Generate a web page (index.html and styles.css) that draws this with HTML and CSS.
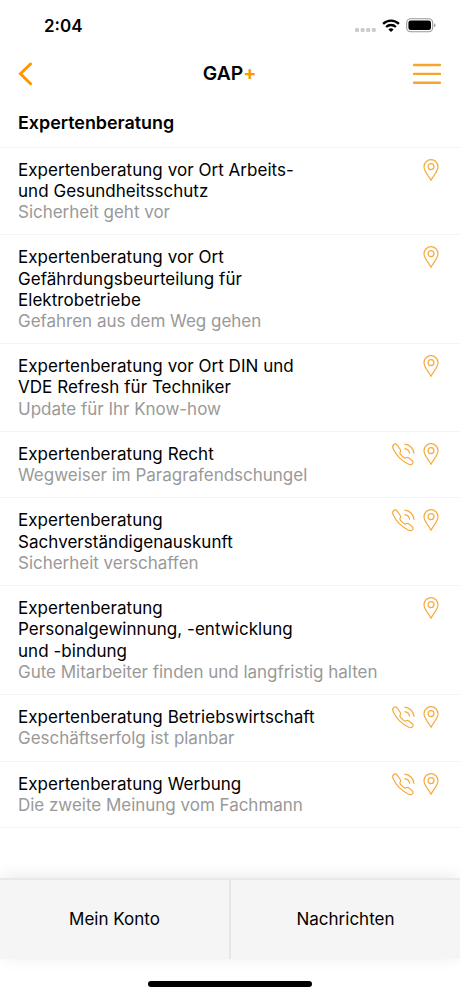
FILE: index.html
```html
<!DOCTYPE html>
<html lang="de">
<head>
  <meta charset="UTF-8" />
  <meta name="viewport" content="width=device-width, initial-scale=1.0"/>
  <title>GAP+ Expertenberatung</title>
  <link rel="stylesheet" href="styles.css">
</head>
<body>
  <!-- Icons -->
  <svg class="sprite" aria-hidden="true">
    <symbol id="pin" viewBox="0 0 16 22">
      <path d="M8 21.2C6.2 17.3 1 12.4 1 7.7a7 7 0 0 1 14 0c0 4.7-5.2 9.6-7 13.5z"/>
      <circle cx="8" cy="7.6" r="3"/>
    </symbol>
    <symbol id="telefon" viewBox="0 0 24 24">
      <path d="M2.700 1.500C1.400 2.500 1.400 4.200 2.400 6.200c1.400 2.900 3.200 5.700 5.900 8.400 2.800 2.800 6 5.100 9.400 6.700 1.500.7 2.900.5 3.900-.7.8-1 .7-2-.3-2.900l-3.800-3c-.9-.7-1.700-.5-2.500.1-.6.500-1.200.5-1.900 0-1.500-1.100-2.900-2.500-3.900-3.900-.5-.7-.4-1.300.1-1.900.6-.8.600-1.400.1-2.300L6.300 2.200C5.400.7 4 .5 2.700 1.500z"/>
      <path d="M13.400 1.200c5.100.2 9.200 4.100 9.600 9.400M13.400 5.600c2.800.2 4.900 2.200 5.200 5"/>
    </symbol>
  </svg>

  <div class="status">
    <span class="uhrzeit">2:04</span>
    <div class="status-icons">
      <svg class="signal" width="21" height="4" viewBox="0 0 21 4">
        <rect x="0" y="0" width="4" height="4" rx="1.300"/>
        <rect x="5.600" y="0" width="4" height="4" rx="1.300"/>
        <rect x="11.200" y="0" width="4" height="4" rx="1.300"/>
        <rect x="16.800" y="0" width="4" height="4" rx="1.300"/>
      </svg>
      <svg class="wlan" width="18" height="13" viewBox="0 0 18 13">
        <path d="M1.100 4.900a11.300 11.300 0 0 1 15.800 0M4.100 8a7 7 0 0 1 9.800 0" fill="none" stroke="#000" stroke-width="2.300"/>
        <path d="M9 13L6.400 10.400a3.900 3.900 0 0 1 5.200 0z"/>
      </svg>
      <svg class="akku" width="30" height="15" viewBox="0 0 30 15">
        <rect x=".7" y=".7" width="26" height="13" rx="4" fill="none" stroke="#999" stroke-width="1.100"/>
        <rect x="2.400" y="2.400" width="22.600" height="9.600" rx="2.300"/>
        <path d="M28.200 5.300q1.200.5 1.200 2t-1.200 2z" fill="#888"/>
      </svg>
    </div>
  </div>

  <header class="kopf">
    <svg class="zurueck" width="16" height="24" viewBox="0 0 16 24">
      <path d="M13.500 2L3.500 11.800 13.500 21.700"/>
    </svg>
    <h1 class="logo">GAP<span>+</span></h1>
    <svg class="menue" width="28" height="22" viewBox="0 0 28 22">
      <path d="M1 2h26M1 10.900h26M1 19.800h26"/>
    </svg>
  </header>

  <h2 class="titel">Expertenberatung</h2>

  <ul class="liste">
    <li class="eintrag">
      <div class="text">
        <p class="name">Expertenberatung vor Ort Arbeits-<br>und Gesundheitsschutz</p>
        <p class="info">Sicherheit geht vor</p>
      </div>
      <div class="icons"><svg class="pin"><use href="#pin"/></svg></div>
    </li>
    <li class="eintrag">
      <div class="text">
        <p class="name">Expertenberatung vor Ort<br>Gefährdungsbeurteilung für<br>Elektrobetriebe</p>
        <p class="info">Gefahren aus dem Weg gehen</p>
      </div>
      <div class="icons"><svg class="pin"><use href="#pin"/></svg></div>
    </li>
    <li class="eintrag">
      <div class="text">
        <p class="name">Expertenberatung vor Ort DIN und<br>VDE Refresh für Techniker</p>
        <p class="info">Update für Ihr Know-how</p>
      </div>
      <div class="icons"><svg class="pin"><use href="#pin"/></svg></div>
    </li>
    <li class="eintrag">
      <div class="text">
        <p class="name">Expertenberatung Recht</p>
        <p class="info">Wegweiser im Paragrafendschungel</p>
      </div>
      <div class="icons"><svg class="telefon"><use href="#telefon"/></svg><svg class="pin"><use href="#pin"/></svg></div>
    </li>
    <li class="eintrag">
      <div class="text">
        <p class="name">Expertenberatung<br>Sachverständigenauskunft</p>
        <p class="info">Sicherheit verschaffen</p>
      </div>
      <div class="icons"><svg class="telefon"><use href="#telefon"/></svg><svg class="pin"><use href="#pin"/></svg></div>
    </li>
    <li class="eintrag">
      <div class="text">
        <p class="name">Expertenberatung<br>Personalgewinnung, -entwicklung<br>und -bindung</p>
        <p class="info">Gute Mitarbeiter finden und langfristig halten</p>
      </div>
      <div class="icons"><svg class="pin"><use href="#pin"/></svg></div>
    </li>
    <li class="eintrag">
      <div class="text">
        <p class="name">Expertenberatung Betriebswirtschaft</p>
        <p class="info">Geschäftserfolg ist planbar</p>
      </div>
      <div class="icons"><svg class="telefon"><use href="#telefon"/></svg><svg class="pin"><use href="#pin"/></svg></div>
    </li>
    <li class="eintrag">
      <div class="text">
        <p class="name">Expertenberatung Werbung</p>
        <p class="info">Die zweite Meinung vom Fachmann</p>
      </div>
      <div class="icons"><svg class="telefon"><use href="#telefon"/></svg><svg class="pin"><use href="#pin"/></svg></div>
    </li>
  </ul>

  <nav class="leiste">
    <a class="tab">Mein Konto</a>
    <a class="tab">Nachrichten</a>
  </nav>
  <div class="home"></div>
</body>
</html>
```
FILE: styles.css
```css
* {
  box-sizing: border-box;
  margin: 0;
  padding: 0;
}

body {
  display: flex;
  flex-direction: column;
  height: 996px;
  font-family: Inter, "Liberation Sans", sans-serif;
  font-size: 17px;
  line-height: 21.2px;
  color: #000;
  background-color: #fff;
  overflow: hidden;
}

svg {
  display: block;
  flex: none;
}

.sprite {
  width: 0;
  height: 0;
}

/* Statusleiste */
.status {
  display: flex;
  justify-content: space-between;
  height: 50px;
  padding: 15px 24px 0 44px;
}

.uhrzeit {
  padding-top: 1px;
  font-size: 17px;
  font-weight: 600;
}

.status-icons {
  display: flex;
  gap: 6px;
  height: 21px;
  align-items: center;
}

.signal {
  margin-top: 9px;
  fill: #ccc;
}

/* Kopfbereich */
.kopf {
  display: flex;
  align-items: center;
  justify-content: space-between;
  height: 47px;
  padding: 0 19px 0 17px;
}

.zurueck,
.menue {
  fill: none;
  stroke: #ff9800;
  stroke-linecap: round;
}

.zurueck {
  stroke-width: 3;
}

.menue {
  stroke: #f5a52a;
  stroke-width: 2.4;
}

.logo {
  margin-left: 13px;
  padding-top: 1px;
  font-size: 19.3px;
  font-weight: 600;
}

.logo span {
  color: #ff9800;
  font-weight: 700;
}

.titel {
  height: 49.6px;
  padding: 15px 18px 0;
  font-size: 17.9px;
  font-weight: 600;
}

/* Liste */
.liste {
  list-style: none;
  border-top: 1px solid #f4f4f4;
}

.eintrag {
  display: flex;
  justify-content: space-between;
  padding: 12px 21px 11.100px 18px;
  border-bottom: 1px solid #f4f4f4;
}

.text {
  white-space: nowrap;
}

.name {
  letter-spacing: 0.04px;
}

.info {
  color: #999;
  letter-spacing: -0.02px;
}

.icons {
  display: flex;
  gap: 8px;
  margin-top: -1px;
  fill: none;
  stroke: #f7aa3c;
  stroke-width: 1.2;
}

.pin {
  width: 16px;
  height: 22px;
}

.telefon {
  width: 24px;
  height: 24px;
}

/* Untere Leiste */
.leiste {
  display: flex;
  height: 81px;
  margin-top: auto;
  background-color: #f5f5f5;
  border-top: 2px solid #e9e9e9;
  box-shadow: 0 -2px 18px -3px rgba(0, 0, 0, 0.12);
}

.tab {
  flex: 1;
  padding-top: 29px;
  text-align: center;
}

.tab + .tab {
  border-left: 2px solid #e6e6e6;
}

.home {
  width: 164px;
  height: 6px;
  margin: 22px auto 9px;
  border-radius: 3px;
  background-color: #000;
}
```
